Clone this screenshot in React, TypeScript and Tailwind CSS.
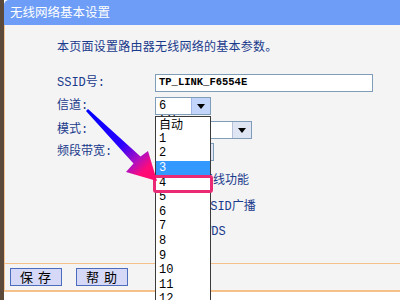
import React from "react";

const cjk = { fontFamily: "'Noto Sans CJK SC', 'Noto Sans', sans-serif" };
const mono = { fontFamily: "'Liberation Mono', 'Noto Sans CJK SC', monospace" };

function Arrow({ active }: { active?: boolean }) {
  return (
    <div
      className={
        "h-full w-[19px] flex items-center justify-center border-l " +
        (active ? "bg-[#c3d5fb] border-[#9fb6e6]" : "bg-[#dfe5f2] border-[#b5c1d9]")
      }
    >
      <svg width="8" height="5" viewBox="0 0 8 5">
        <polygon points="0,0 8,0 4,5" fill="#000" />
      </svg>
    </div>
  );
}

export default function App() {
  const items = ["自动", "1", "2", "3", "4", "5", "6", "7", "8", "9", "10", "11", "12"];
  return (
    <div className="relative w-[400px] h-[300px] overflow-hidden bg-white flex">
      <div className="w-[4px] h-full bg-[#5b4a3a]" />
      <div className="flex-1 flex flex-col">
        <div
          className="h-[25px] bg-[#6d9df6] rounded-tl-[5px] flex items-center pl-[6px] text-white text-[12.5px]"
          style={cjk}
        >
          无线网络基本设置
        </div>
        <div className="h-[238px] border-l border-[#f4c494] bg-[#f4f4f4] pl-[52px] pt-[12px] flex flex-col text-[#1a3a8c]">
          <div className="h-[18px] flex items-center text-[12px] tracking-[0.25px]" style={cjk}>
            本页面设置路由器无线网络的基本参数。
          </div>
          <div className="mt-[19px] h-[18px] flex items-center">
            <div className="w-[98px] text-[12px]" style={mono}>SSID号:</div>
            <div
              className="w-[218px] h-[18px] bg-white border border-[#7f9db9] flex items-center pl-[3px] text-[10.5px] font-bold text-black"
              style={mono}
            >
              TP_LINK_F6554E
            </div>
          </div>
          <div className="mt-[5px] h-[18px] flex items-center">
            <div className="w-[98px] text-[12px]" style={mono}>信道:</div>
            <div className="w-[56px] h-[18px] bg-white border border-[#7f9db9] flex items-center text-black">
              <div className="flex-1 pl-[3px] text-[12px]" style={mono}>6</div>
              <Arrow active />
            </div>
          </div>
          <div className="mt-[6px] h-[18px] flex items-center">
            <div className="w-[98px] text-[12px]" style={mono}>模式:</div>
            <div className="w-[97px] h-[18px] bg-white border border-[#7f9db9] flex items-center text-black">
              <div className="flex-1 pl-[2px] text-[12px]" style={mono}>11bgn mixed</div>
              <Arrow />
            </div>
          </div>
          <div className="mt-[4px] h-[18px] flex items-center">
            <div className="w-[98px] text-[12px]" style={mono}>频段带宽:</div>
            <div className="w-[59px] h-[18px] bg-white border border-[#7f9db9] flex items-center text-black">
              <div className="flex-1 pl-[3px] text-[12px]" style={mono}>自动</div>
              <Arrow />
            </div>
          </div>
          <div className="mt-[11px] h-[18px] flex items-center pl-[120px] text-[12px]" style={mono}>
            开启无线功能
          </div>
          <div className="mt-[8px] h-[18px] flex items-center pl-[122px] text-[12px]" style={mono}>
            开启SSID广播
          </div>
          <div className="mt-[7px] h-[18px] flex items-center pl-[123px] text-[12px]" style={mono}>
            开启WDS
          </div>
        </div>
        <div className="h-[1px] bg-[#f6c08a]" />
        <div className="h-[26px] border-l border-[#f4c494] bg-[#f4f4f4] flex items-center pl-[5px] gap-[14px]">
          <button
            className="w-[52px] h-[18px] bg-[#d5d9f7] border border-[#4c6cbc] text-[13px] text-black tracking-[5px] pl-[4px] flex items-center justify-center"
            style={cjk}
          >
            保存
          </button>
          <button
            className="w-[52px] h-[18px] bg-[#d5d9f7] border border-[#4c6cbc] text-[13px] text-black tracking-[5px] pl-[4px] flex items-center justify-center"
            style={cjk}
          >
            帮助
          </button>
        </div>
        <div className="h-[2px] bg-[#f6c08a]" />
        <div className="flex-1 bg-white" />
      </div>

      {/* dropdown list */}
      <div className="absolute left-[155px] top-[116px] w-[56px] h-[200px] bg-white border border-[#3a3a3a] text-black">
        {items.map((it, i) => (
          <div
            key={it}
            className={
              "h-[14.6px] flex items-center pl-[3px] text-[12px] leading-[12px] " +
              (i === 3 ? "bg-[#3399ff] text-white" : "")
            }
            style={i === 0 ? cjk : mono}
          >
            {it}
          </div>
        ))}
      </div>

      {/* red highlight box */}
      <div className="absolute left-[153px] top-[175px] w-[60px] h-[18px] border-[3px] border-[#ea2a74] rounded-[3px]" />

      {/* arrow */}
      <svg className="absolute left-0 top-0" width="400" height="300" viewBox="0 0 400 300">
        <defs>
          <linearGradient id="ag" gradientUnits="userSpaceOnUse" x1="87" y1="110" x2="156" y2="180">
            <stop offset="0" stopColor="#0000ff" />
            <stop offset="0.5" stopColor="#2a00ff" />
            <stop offset="0.72" stopColor="#b010c0" />
            <stop offset="0.85" stopColor="#ff0a78" />
            <stop offset="1" stopColor="#ff0a6a" />
          </linearGradient>
        </defs>
        <polygon
          points="88,109 140.5,156.5 148,151 157,181 126,172 133.5,163.5 86,111"
          fill="url(#ag)"
        />
      </svg>
    </div>
  );
}
